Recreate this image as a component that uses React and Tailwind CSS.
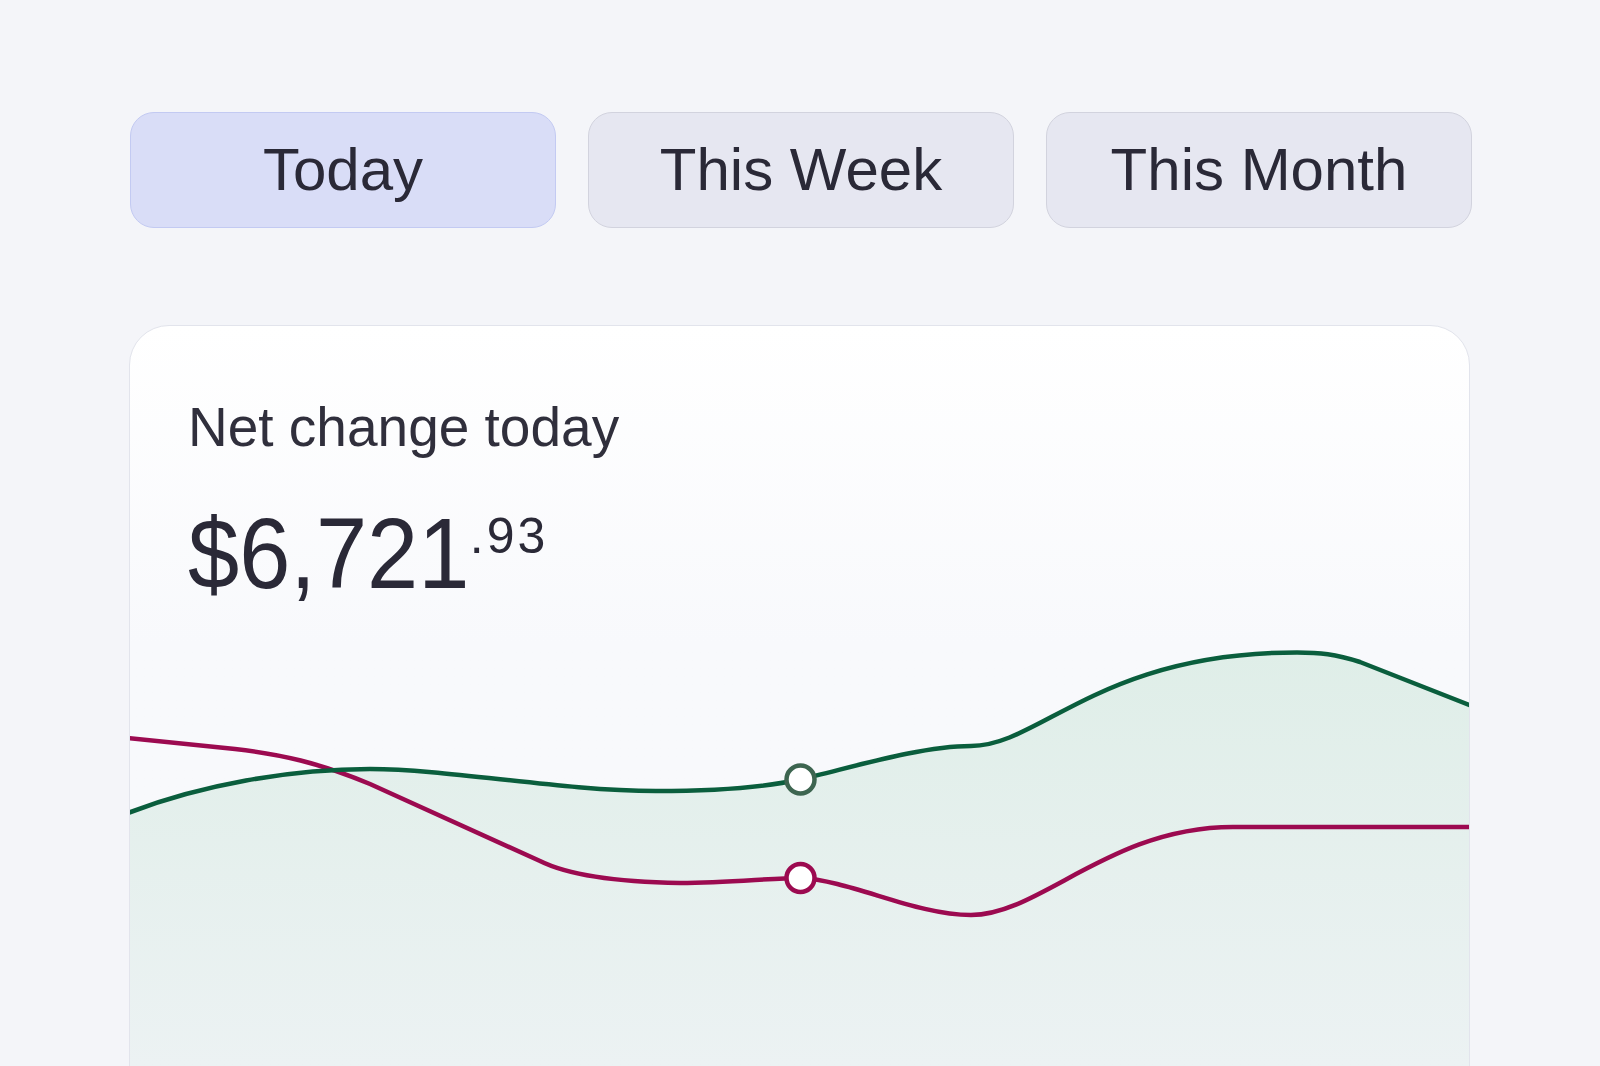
import React from 'react';

const ranges = ['Today', 'This Week', 'This Month'];

function NetChart() {
    const green =
        'M128 813 C200 785 290 769 370 769 C450 769 560 791 656 791 C720 791 770 786 800 779.5 C850 768 920 746 971 746 C1040 746 1100 652.5 1297 652.5 C1320 652.5 1335 654 1360 662 L1472 706';
    const magenta =
        'M128 738 L235 749 C280 754 320 763 370 784 L540 861 C570 876 620 882 680 883 C730 883 770 878 800 878 C850 880 915 915 971 915 C1040 915 1110 827 1233 827 L1472 827';

    return (
        <svg width="1340" height="460" viewBox="130 620 1340 460" className="block">
            <defs>
                <linearGradient id="fill" x1="0" y1="650" x2="0" y2="1066" gradientUnits="userSpaceOnUse">
                    <stop offset="0" stopColor="#dfeee8" />
                    <stop offset="1" stopColor="#ecf2f3" />
                </linearGradient>
            </defs>
            {/* area under the green line */}
            <path d={`${green} L1472 1080 L128 1080 Z`} fill="url(#fill)" />
            <path d={magenta} fill="none" stroke="#9c0a50" strokeWidth="4.5" strokeLinecap="round" />
            <path d={green} fill="none" stroke="#0a5e3d" strokeWidth="4.5" strokeLinecap="round" />
            <circle cx="800.5" cy="779.5" r="14" fill="#fff" stroke="#3d6550" strokeWidth="4.5" />
            <circle cx="800.5" cy="878" r="14" fill="#fff" stroke="#9c0a50" strokeWidth="4.5" />
        </svg>
    );
}

export default function App() {
    return (
        <div className="h-[1066px] overflow-hidden bg-[#f4f5f9] font-['Liberation_Sans',Arial,sans-serif] text-[#2a2937]">
            <div className="ml-[130px] w-[1342px] pt-[112px]">
                {/* Range tabs */}
                <div className="grid grid-cols-3 gap-[32px]">
                    {ranges.map((r, i) => (
                        <button
                            key={r}
                            className={
                                i === 0
                                    ? 'h-[116px] rounded-[24px] border-[1.5px] border-[#c3caf2] bg-[#d9ddf7] text-[60px]'
                                    : 'h-[116px] rounded-[24px] border-[1.5px] border-[#d2d3de] bg-[#e6e7f1] text-[60px]'
                            }
                        >
                            {r}
                        </button>
                    ))}
                </div>

                {/* Net change card */}
                <div className="-ml-px mt-[97px] h-[800px] w-[1341px] overflow-hidden rounded-[40px] border border-[#e2e4ec] bg-linear-to-b from-white via-[#f8f9fc] via-40% to-[#f8f9fc]">
                    <div className="pl-[58px] pt-[74px]">
                        <p className="text-[55px] leading-none text-[#302f3c]">Net change today</p>
                        <div className="mt-[48px] flex items-start">
                            <span className="origin-left scale-x-[0.92] text-[100px] leading-none">$6,721</span>
                            <span className="-ml-[24px] mt-[8px] text-[50px] leading-none tracking-[3px]">.93</span>
                        </div>
                    </div>
                    <div className="mt-[17px]">
                        <NetChart />
                    </div>
                </div>
            </div>
        </div>
    );
}
